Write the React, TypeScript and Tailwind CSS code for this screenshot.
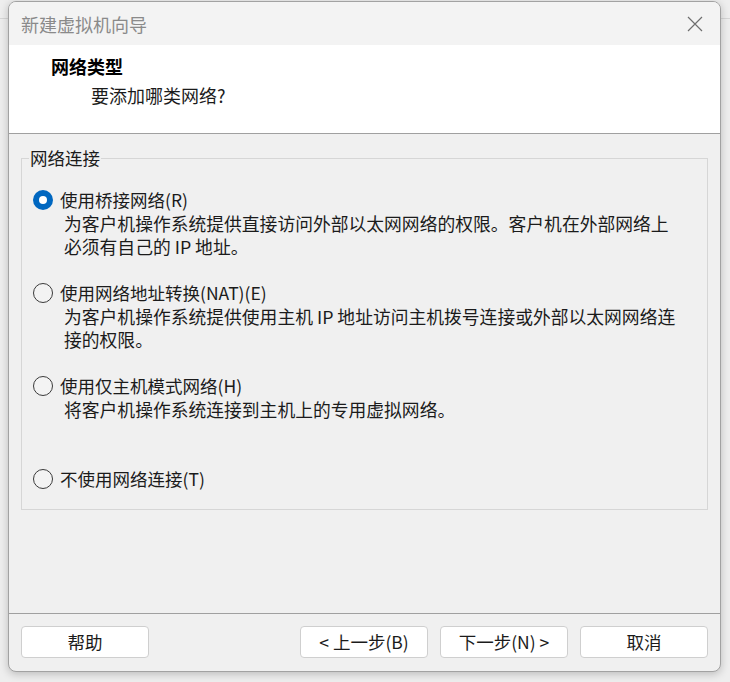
import React from "react";

const options = [
  {
    label: "使用桥接网络",
    key: "(R)",
    lines: [
      "为客户机操作系统提供直接访问外部以太网网络的权限。客户机在外部网络上",
      "必须有自己的 IP 地址。",
    ],
    checked: true,
  },
  {
    label: "使用网络地址转换",
    key: "(NAT)(E)",
    lines: [
      "为客户机操作系统提供使用主机 IP 地址访问主机拨号连接或外部以太网网络连",
      "接的权限。",
    ],
    checked: false,
  },
  {
    label: "使用仅主机模式网络",
    key: "(H)",
    lines: ["将客户机操作系统连接到主机上的专用虚拟网络。", ""],
    checked: false,
  },
  {
    label: "不使用网络连接",
    key: "(T)",
    lines: [],
    checked: false,
  },
];

function Radio({ checked }: { checked: boolean }) {
  if (checked) {
    return (
      <span className="flex h-[20px] w-[20px] shrink-0 items-center justify-center rounded-full bg-[#0067c0]">
        <span className="h-[8px] w-[8px] rounded-full bg-white" />
      </span>
    );
  }
  return (
    <span className="h-[20px] w-[20px] shrink-0 rounded-full border border-[#3a3a3a] bg-[#f3f3f3]" />
  );
}

function Button({ children }: { children: React.ReactNode }) {
  return (
    <button className="flex h-[32px] w-[128px] items-center justify-center rounded-[4px] border border-[#cfcfcf] bg-white text-[17.5px] leading-none text-[#1b1b1b]">
      {children}
    </button>
  );
}

export default function App() {
  return (
    <div
      className="relative h-[682px] w-[730px] overflow-hidden bg-[#eeeeee] pl-[8px] pt-[1px]"
      style={{ fontFamily: '"Noto Sans CJK SC", "Noto Sans", sans-serif' }}
    >
      <div className="absolute left-0 right-0 top-[18px] h-px bg-[#d6d6d6]" />
      <div className="relative flex h-[671px] w-[713px] flex-col overflow-hidden rounded-[8px] border border-[#a2a2a2] bg-[#f0f0f0] shadow-[0_2px_8px_rgba(0,0,0,0.22)]">
        {/* title bar */}
        <div className="flex h-[43px] shrink-0 items-center justify-between bg-[#f3f3f3] pl-[12px] pr-[17px]">
          <span className="text-[18px] leading-none text-[#8a8a8a]">新建虚拟机向导</span>
          <svg width="16" height="16" viewBox="0 0 16 16" fill="none">
            <path d="M1 1L15 15M15 1L1 15" stroke="#6e6e6e" strokeWidth="1.2" />
          </svg>
        </div>

        {/* header */}
        <div className="flex h-[89px] shrink-0 flex-col border-b border-[#a0a0a0] bg-white pl-[42px] pt-[9px]">
          <div className="text-[18px] font-bold leading-[24px] text-black">网络类型</div>
          <div className="mt-[5px] pl-[40px] text-[18px] leading-[24px] text-[#1b1b1b]">要添加哪类网络?</div>
        </div>

        {/* body */}
        <div className="flex-1 px-[12px] pt-[14px]">
          <fieldset className="border border-[#d6d6d6] pb-[18px] pl-[11px] pt-[20px]">
            <legend className="-ml-[4px] px-[1px] text-[17.5px] leading-[20px] text-[#1b1b1b]">网络连接</legend>
            <div className="flex flex-col gap-[23px]">
              {options.map((o) => (
                <div key={o.label} className="flex flex-col">
                  <div className="flex h-[24px] items-center gap-[7px]">
                    <Radio checked={o.checked} />
                    <span className="whitespace-nowrap text-[17.5px] leading-[24px] text-[#1b1b1b]">
                      {o.label}
                      {o.key}
                    </span>
                  </div>
                  {o.lines.map((l, i) => (
                    <div
                      key={i}
                      className="h-[23px] whitespace-nowrap pl-[31px] text-[17.8px] leading-[23px] text-[#1b1b1b]"
                    >
                      {l}
                    </div>
                  ))}
                </div>
              ))}
            </div>
          </fieldset>
        </div>

        {/* footer */}
        <div className="flex h-[58px] shrink-0 items-start justify-between border-t border-[#a0a0a0] px-[12px] pt-[12px]">
          <Button>帮助</Button>
          <div className="flex gap-[12px]">
            <Button>&lt; 上一步(B)</Button>
            <Button>下一步(N) &gt;</Button>
            <Button>取消</Button>
          </div>
        </div>
      </div>
    </div>
  );
}
